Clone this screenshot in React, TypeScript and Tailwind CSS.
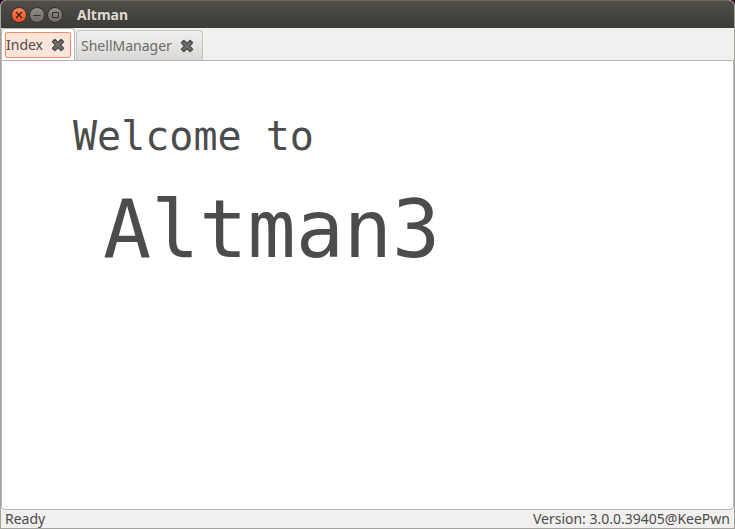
import { useState } from "react";

const windowButton =
  "flex size-4 items-center justify-center rounded-full border border-[#33322e]";

function CloseIcon() {
  return (
    <svg viewBox="0 0 14 14" className="size-3.5" aria-hidden="true">
      <path
        d="M3.7 1.3 7 4.3 10.3 1.3 12.7 3.7 9.7 7 12.7 10.3 10.3 12.7 7 9.7 3.7 12.7 1.3 10.3 4.3 7 1.3 3.7Z"
        fill="#6b6b69"
        stroke="#4a4a48"
        strokeWidth="1.2"
        strokeLinejoin="round"
      />
    </svg>
  );
}

function TitleBar() {
  return (
    <header className="flex h-7 shrink-0 items-center rounded-t-md border-t border-[#68665e] bg-linear-to-b from-[#504e47] to-[#3c3b37] pl-2.5">
      <div className="flex gap-0.5">
        <button
          aria-label="Close"
          className={`${windowButton} bg-linear-to-b from-[#fa8058] to-[#ec4f1c]`}
        >
          <svg viewBox="0 0 16 16" className="size-4 shrink-0" aria-hidden="true">
            <path d="m5 5 6 6m0-6-6 6" stroke="#3b1c10" strokeWidth="1.2" />
          </svg>
        </button>
        <button
          aria-label="Minimize"
          className={`${windowButton} bg-linear-to-b from-[#8f8d85] to-[#6d6b64]`}
        >
          <svg viewBox="0 0 16 16" className="size-4 shrink-0" aria-hidden="true">
            <path d="M4.5 8.5h7" stroke="#33322e" />
          </svg>
        </button>
        <button
          aria-label="Maximize"
          className={`${windowButton} bg-linear-to-b from-[#8f8d85] to-[#6d6b64]`}
        >
          <svg viewBox="0 0 16 16" className="size-4 shrink-0" aria-hidden="true">
            <path d="M5.5 5.5h6v5h-6z" stroke="#33322e" fill="none" />
          </svg>
        </button>
      </div>
      <h1 className="ml-3.5 text-sm font-bold text-[#dfdbd2]">Altman</h1>
    </header>
  );
}

function Tab({
  name,
  active,
  onSelect,
}: {
  name: string;
  active: boolean;
  onSelect: () => void;
}) {
  return (
    <div
      className={
        active
          ? "-mb-px h-[33px] rounded-t border border-b-0 border-[#b6b6b3] bg-white p-[3px]"
          : "mt-0.5 flex h-[31px] items-center rounded-t border border-b-0 border-[#c6c5c2] bg-linear-to-b from-[#f1f0ef] to-[#d9d7d4] pr-2 pl-1 text-[#6d6d6b]"
      }
    >
      <div
        className={
          active
            ? "flex h-[26px] items-center rounded-xs border border-[#f58e64] bg-[#fde5dc] pr-[5px]"
            : "flex items-center"
        }
      >
        <button role="tab" aria-selected={active} onClick={onSelect}>
          {name}
        </button>
        <button aria-label={`Close ${name}`} className="ml-2">
          <CloseIcon />
        </button>
      </div>
    </div>
  );
}

export default function App() {
  const [selected, setSelected] = useState("Index");

  return (
    <div className="bg-[#2c001e]">
      <div className="flex min-h-screen flex-col rounded-t-md border-x border-b border-[#a3a29f] bg-[#f1f0ee] font-['Noto_Sans',sans-serif] text-sm text-[#4c4c4c]">
        <TitleBar />
        <div role="tablist" className="flex h-8 shrink-0 gap-px">
          {["Index", "ShellManager"].map((name) => (
            <Tab
              key={name}
              name={name}
              active={selected === name}
              onSelect={() => setSelected(name)}
            />
          ))}
        </div>
        <main className="flex-1 rounded-b border border-[#b6b6b3] bg-white px-[71px] pt-12 font-['DejaVu_Sans_Mono',monospace]">
          <p className="text-[40px] leading-[54px]">Welcome to</p>
          <p className="pl-[30px] text-[80px] leading-[134px]">Altman3</p>
        </main>
        <footer className="flex h-[18px] shrink-0 items-center justify-between px-1">
          <span>Ready</span>
          <span>Version: 3.0.0.39405@KeePwn</span>
        </footer>
      </div>
    </div>
  );
}
